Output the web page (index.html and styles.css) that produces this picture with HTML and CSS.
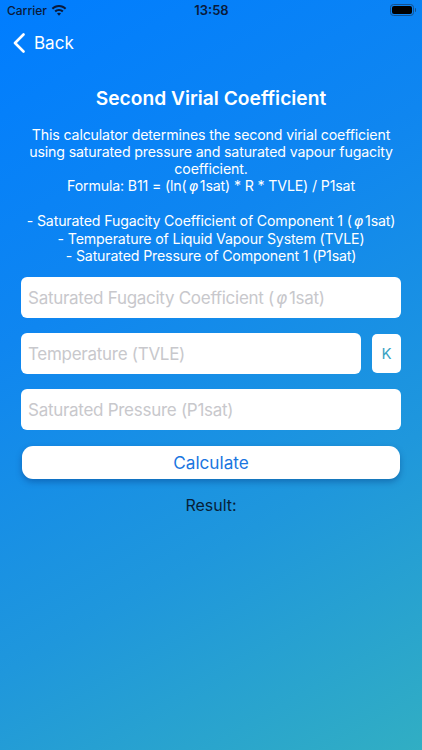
FILE: index.html
```html
<!DOCTYPE html>
<html lang="en">
<head>
<meta charset="utf-8">
<title>Second Virial Coefficient</title>
<link rel="stylesheet" href="styles.css">
</head>
<body>
<div class="screen">
  <header class="status">
    <div class="status-left">
      <span>Carrier</span>
      <svg class="wifi" viewBox="0 0 16 12" width="16" height="12"><path fill="#0a1a3a" d="M8 1C5.100 1 2.600 2.100.7 3.900l1.400 1.500C3.600 3.900 5.700 3 8 3s4.400.9 5.900 2.400l1.400-1.500C13.400 2.100 10.900 1 8 1zm0 3.900c-1.800 0-3.300.7-4.500 1.800l1.400 1.500C5.700 7.400 6.800 6.900 8 6.900s2.300.5 3.100 1.300l1.400-1.500C11.300 5.600 9.800 4.900 8 4.900zm0 3.900c-.8 0-1.500.3-2 .8l2 2.200 2-2.200c-.5-.5-1.200-.8-2-.8z"/></svg>
    </div>
    <div class="status-time">13:58</div>
    <div class="status-right">
      <span class="battery"><span class="battery-fill"></span></span><span class="battery-cap"></span>
    </div>
  </header>
  <nav class="nav">
    <svg class="chevron" viewBox="0 0 12 20" width="12" height="20"><path d="M10.500 1.500 2 10l8.500 8.500" fill="none" stroke="#fff" stroke-width="2.600" stroke-linecap="round" stroke-linejoin="round"/></svg>
    <span class="back">Back</span>
  </nav>
  <h1 class="title">Second Virial Coefficient</h1>
  <p class="desc">This calculator determines the second virial coefficient<br>using saturated pressure and saturated vapour fugacity<br>coefficient.<br>Formula: B11 = (ln(<i class="phi">φ</i>1sat) * R * TVLE) / P1sat<br><br>- Saturated Fugacity Coefficient of Component 1 (<i class="phi">φ</i>1sat)<br>- Temperature of Liquid Vapour System (TVLE)<br>- Saturated Pressure of Component 1 (P1sat)</p>
  <form class="form">
    <div class="field"><span class="ph">Saturated Fugacity Coefficient (<i class="phi">φ</i>1sat)</span></div>
    <div class="row">
      <div class="field grow"><span class="ph">Temperature (TVLE)</span></div>
      <div class="unit">K</div>
    </div>
    <div class="field"><span class="ph">Saturated Pressure (P1sat)</span></div>
    <div class="calc">Calculate</div>
  </form>
  <div class="result">Result:</div>
</div>
</body>
</html>
```
FILE: styles.css
```css
* { box-sizing: border-box; }
html, body { margin: 0; padding: 0; }
body { font-family: Inter, "Liberation Sans", sans-serif; }
.screen {
  width: 422px;
  height: 750px;
  overflow: hidden;
  color: #fff;
  background: linear-gradient(150deg, #007dff 0%, #0f86f0 35%, #1f97dc 68%, #31aec3 100%);
}
.status {
  height: 20px;
  padding: 0 6px 0 7px;
  display: grid;
  grid-template-columns: 1fr auto 1fr;
  align-items: center;
  font-size: 12px;
  font-weight: 500;
  color: #0a1a3a;
}
.status-left { display: flex; align-items: center; gap: 4px; }
.status-time { font-weight: 600; font-size: 13px; }
.status-right { display: flex; align-items: center; justify-content: flex-end; }
.battery {
  width: 24px;
  height: 12px;
  border: 1px solid #15528f;
  border-radius: 3.500px;
  padding: 1px;
  display: block;
}
.battery-fill { display: block; height: 100%; background: #000; border-radius: 2px; }
.battery-cap { width: 1.500px; height: 4px; background: #15528f; margin-left: 1px; border-radius: 0 1px 1px 0; }
.nav {
  height: 45px;
  padding: 0 0 0 13px;
  display: flex;
  align-items: center;
  gap: 9px;
}
.back { font-size: 17px; }
.title {
  margin: 21px 0 0;
  font-size: 19.200px;
  line-height: 24px;
  font-weight: 600;
  text-align: center;
}
.phi {
  font-family: "DejaVu Sans", sans-serif;
  font-style: italic;
  font-weight: 300;
  padding: 0 2px;
}
.desc {
  margin: 16px 0 0;
  font-size: 14.200px;
  letter-spacing: -0.16px;
  line-height: 17px;
  text-align: center;
}
.form {
  margin: 13px 0 0;
  padding: 0 21px;
  display: flex;
  flex-direction: column;
  gap: 15px;
}
.field {
  height: 41px;
  background: #fff;
  border-radius: 6px;
  display: flex;
  align-items: center;
  padding: 0 7px;
  font-size: 17px;
  letter-spacing: -0.28px;
  color: #c8c8cc;
}
.row { display: flex; align-items: center; gap: 11px; }
.grow { flex: 1; }
.unit {
  width: 29px;
  height: 39px;
  background: #fff;
  border-radius: 5px;
  display: flex;
  align-items: center;
  justify-content: center;
  font-size: 15px;
  color: #3aa3c4;
}
.calc {
  height: 33px;
  margin: 1px 1px 0;
  background: #fff;
  border-radius: 11px;
  box-shadow: 0 3px 6px rgba(0, 40, 110, .35);
  display: flex;
  align-items: center;
  justify-content: center;
  font-size: 17.200px;
  color: #1a76e0;
}
.result {
  margin-top: 16px;
  text-align: center;
  font-size: 16px;
  line-height: 20px;
  font-weight: 400;
  color: #071f38;
}
```
